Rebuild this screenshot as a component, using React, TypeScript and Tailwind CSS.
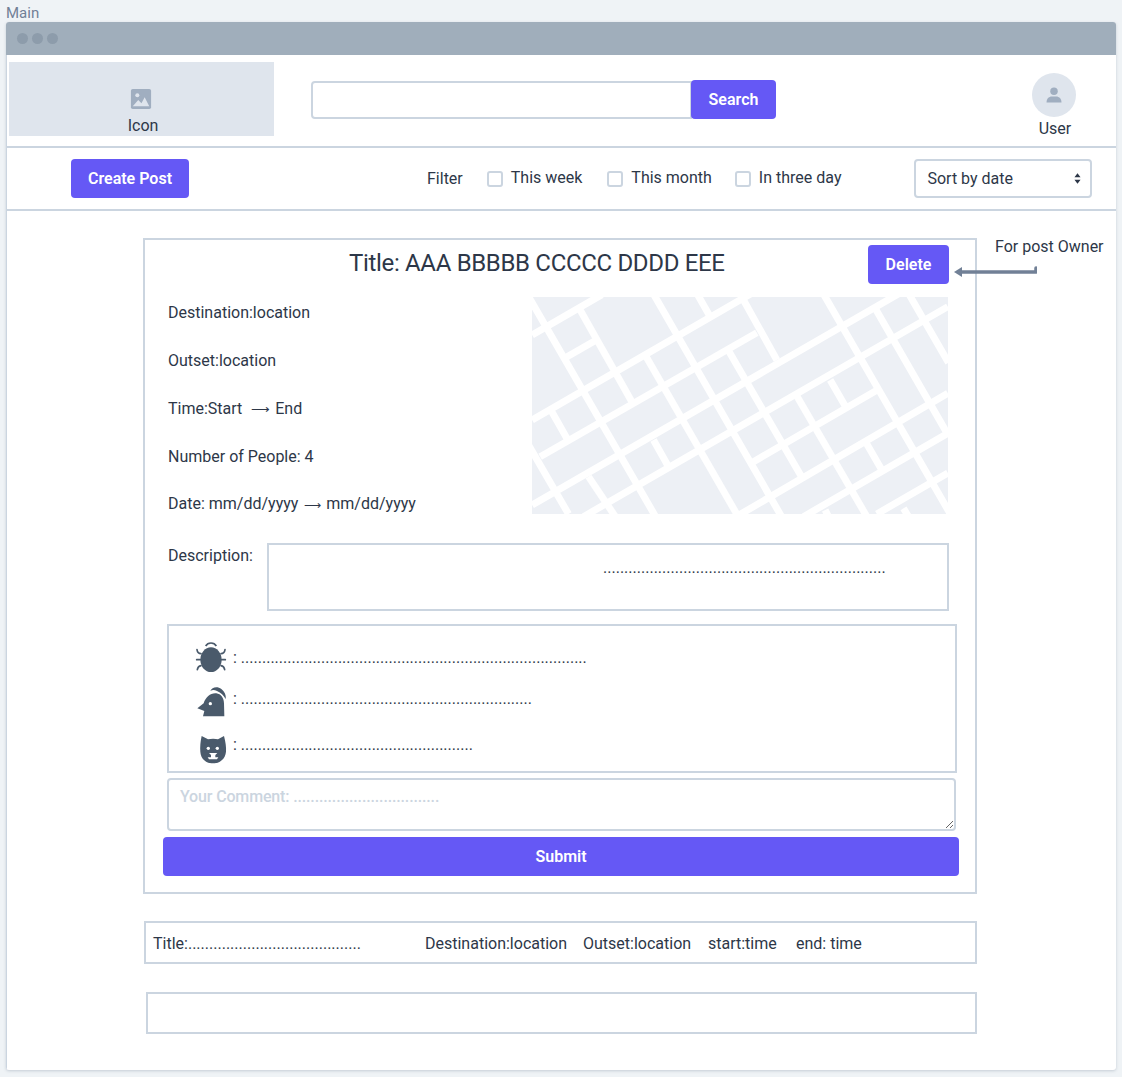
import React from "react";

const F = { fontFamily: '"Roboto", "Liberation Sans", sans-serif' };

const roads: [number, number, number, number][] = [
  [21, 135, 230, 14], [21, 390, 700, -2], [45, 500, 695, 128], [21, 645, 1140, 0],
  [175, 680, 1268, 50], [685, 515, 1060, 298], [640, 676, 1268, 310], [835, 680, 1268, 430],
  [1055, 672, 1268, 549], [118, 205, 212, 151],
  [0, 2, 400, 695], [165, 60, 320, 335], [385, 12, 775, 690], [518, 15, 552, 75],
  [655, 30, 755, 210], [895, 12, 1280, 680], [1050, 55, 1270, 437], [1150, 10, 1270, 218],
  [10, 465, 130, 672], [360, 195, 645, 690], [612, 185, 830, 562], [815, 318, 1035, 697],
  [915, 270, 960, 348], [1025, 462, 1070, 540], [385, 450, 427, 525], [80, 365, 125, 445],
  [190, 560, 272, 682], [1135, 655, 1150, 680], [900, 660, 910, 680],
];

function MapArt() {
  return (
    <svg viewBox="21 21 1247 651" className="block w-[416px] h-[217px] bg-[#edf0f5]">
      {roads.map((r, i) => (
        <line key={i} x1={r[0]} y1={r[1]} x2={r[2]} y2={r[3]} stroke="#ffffff" strokeWidth={21} />
      ))}
    </svg>
  );
}

function Bug() {
  return (
    <svg viewBox="107 67 93 96" className="w-[31px] h-[32px] shrink-0 overflow-visible" fill="#4a5a6b">
      <ellipse cx="152" cy="120" rx="32" ry="37" />
      <path d="M136 79C140 72 146 70 152 70s12 2 16 9" fill="none" stroke="#4a5a6b" strokeWidth="5" />
      <path d="M122 102C116 102 111 97 110 90M120 120H109M122 138C116 139 112 143 111 150M182 102C188 102 193 97 194 90M184 120H195M182 138C188 139 192 143 193 150" fill="none" stroke="#4a5a6b" strokeWidth="5" strokeLinecap="round" />
    </svg>
  );
}

function Chicken() {
  return (
    <svg viewBox="107 201 93 96" className="w-[31px] h-[32px] shrink-0 overflow-visible" fill="#4a5a6b">
      <path d="M111 265 L130 250 C136 230 152 218 168 220 C182 222 191 234 191 250 L192 289 L128 289 L132 273 Z" />
      <circle cx="150" cy="251" r="5" fill="#ffffff" />
      <path d="M150 213 C154 201 172 198 183 207 C192 214 198 225 196 237 C190 226 182 218 170 213 C162 209 156 209 150 213Z" />
    </svg>
  );
}

function Cat() {
  return (
    <svg viewBox="107 339 93 96" className="w-[31px] h-[32px] shrink-0 overflow-visible" fill="#4a5a6b">
      <path d="M124 351 L143 361 C152 359 165 359 173 361 L191 351 C196 370 198 385 197 398 C195 420 178 433 158 433 C138 433 121 420 120 398 C119 385 120 368 124 351Z" />
      <circle cx="144" cy="388" r="5" fill="#ffffff" />
      <circle cx="171" cy="388" r="5" fill="#ffffff" />
      <path d="M146 402 H171 L165 408 V415 H174 L170 421 H146 L142 415 H152 V408Z" fill="#ffffff" />
    </svg>
  );
}

function Check({ label, className }: { label: string; className: string }) {
  return (
    <label className={`flex items-center gap-[8px] text-[16px] text-[#2d3748] ${className}`}>
      <input type="checkbox" className="appearance-none w-[16px] h-[16px] rounded-[3px] border-2 border-[#cbd5e0] bg-white" />
      <span className="-mt-[2px]">{label}</span>
    </label>
  );
}

const dots = (n: number) => ".".repeat(n);

export default function App() {
  return (
    <div style={F} className="w-[1122px] h-[1077px] bg-[#eff3f6] overflow-hidden pt-[5px] pl-[6px]">
      <div className="text-[15px] leading-[17px] text-[#718096]">Main</div>
      <div className="w-[1110px] h-[1048px] bg-white rounded-[3px] shadow-[0_1px_3px_rgba(100,116,139,0.3)] overflow-hidden">
        <div className="h-[33px] bg-[#a0aebb] flex items-center gap-[4px] pl-[11px]">
          <span className="w-[11px] h-[11px] rounded-full bg-[#8d9cab]" />
          <span className="w-[11px] h-[11px] rounded-full bg-[#8d9cab]" />
          <span className="w-[11px] h-[11px] rounded-full bg-[#8d9cab]" />
        </div>
        <div className="h-[1015px] border-l border-[#cbd5e0]">
          <header className="h-[93px] border-b-2 border-[#cbd5e0] flex items-start">
            <div className="ml-[2px] mt-[7px] w-[265px] h-[74px] bg-[#dfe5ed] flex flex-col items-center pt-[26px]">
              <svg viewBox="0 0 24 24" className="w-[22px] h-[22px] -ml-[2px]" fill="#a0aec0">
                <rect x="1" y="1" width="22" height="22" rx="2" />
                <circle cx="8" cy="8" r="2.200" fill="#dfe5ed" />
                <path d="M3 20l6-7 3.500 3.500L16 10l5 10Z" fill="#dfe5ed" />
              </svg>
              <span className="text-[16px] leading-[20px] text-[#2d3748] mt-[6px] ml-[3px]">Icon</span>
            </div>
            <div className="ml-[37px] mt-[25px] flex items-center">
              <input className="w-[381px] h-[38px] rounded-l-[4px] border-2 border-[#cbd5e0] bg-white" />
              <button className="-ml-[1px] w-[85px] h-[39px] rounded-[4px] bg-[#6558f5] text-white font-semibold text-[16px]">Search</button>
            </div>
            <div className="ml-[255px] mt-[18px] w-[46px] flex flex-col items-center">
              <div className="w-[44px] h-[44px] rounded-full bg-[#dfe5ed] flex items-center justify-center">
                <svg viewBox="0 0 24 24" className="w-[18px] h-[18px]" fill="#a0aec0">
                  <circle cx="12" cy="7" r="5" />
                  <path d="M2 22c0-5 3-8 7-8h6c4 0 7 3 7 8Z" />
                </svg>
              </div>
              <span className="text-[16px] leading-[20px] text-[#2d3748] mt-[2px] ml-[2px]">User</span>
            </div>
          </header>
          <div className="h-[63px] border-b-2 border-[#cbd5e0] flex items-center relative">
            <button className="ml-[64px] w-[118px] h-[39px] rounded-[4px] bg-[#6558f5] text-white font-semibold text-[16px]">Create Post</button>
            <span className="ml-[238px] text-[16px] text-[#2d3748]">Filter</span>
            <Check label="This week" className="ml-[24px]" />
            <Check label="This month" className="ml-[25px]" />
            <Check label="In three day" className="ml-[23px]" />
            <div className="relative ml-[73px]">
              <select className="appearance-none w-[178px] h-[39px] rounded-[4px] border-2 border-[#cbd5e0] bg-white pl-[11px] text-[16px] text-[#2d3748]">
                <option>Sort by date</option>
              </select>
              <svg viewBox="0 0 8 12" className="absolute right-[11px] top-[14px] w-[7px] h-[11px]" fill="#2d3748">
                <path d="M4 0l3.500 4.500h-7ZM4 12 .5 7.500h7Z" />
              </svg>
            </div>
          </div>
          <main className="pl-[136px] pt-[27px] relative">
            <section className="w-[834px] h-[656px] border-2 border-[#cbd5e0] relative">
              <div className="flex items-start h-[57px]">
                <h1 className="ml-[204px] mt-[7px] text-[24px] leading-[32px] tracking-[-0.33px] text-[#2d3748] whitespace-nowrap">Title: AAA BBBBB CCCCC DDDD EEE</h1>
                <button className="absolute left-[723px] top-[5px] w-[81px] h-[39px] rounded-[4px] bg-[#6558f5] text-white font-semibold text-[16px]">Delete</button>
              </div>
              <div className="flex">
                <div className="ml-[23px] w-[364px] h-[217px] pt-[4px] text-[16px] leading-[24px] text-[#2d3748] flex flex-col gap-[24px]">
                  <div>Destination:location</div>
                  <div>Outset:location</div>
                  <div>Time:Start&nbsp; <span className="text-[13px] mx-[1px]">⟶</span> End</div>
                  <div className="-mt-[1px]">Number of People: 4</div>
                  <div className="-mt-[1px]">Date: mm/dd/yyyy <span className="text-[12px] mx-[1.5px]">⟶</span> mm/dd/yyyy</div>
                </div>
                <MapArt />
              </div>
              <div className="flex items-start mt-[29px] ml-[23px]">
                <span className="text-[16px] leading-[24px] mt-[1px] text-[#2d3748] w-[99px]">Description:</span>
                <div className="w-[682px] h-[68px] border-2 border-[#cbd5e0] pl-[334px] pt-[11px] text-[16px] leading-[24px] text-[#2d3748] whitespace-nowrap">{dots(67)}</div>
              </div>
              <div className="ml-[22px] mt-[13px] w-[790px] h-[149px] border-2 border-[#cbd5e0] pt-[11px] pl-[27px] flex flex-col text-[16px] text-[#2d3748]">
                <div className="h-[43px] flex items-center gap-[6px]"><Bug /><span className="whitespace-nowrap">: {dots(82)}</span></div>
                <div className="h-[46px] flex items-center gap-[6px]"><Chicken /><span className="whitespace-nowrap -mt-[8px]">: {dots(69)}</span></div>
                <div className="h-[46px] flex items-center gap-[6px]"><Cat /><span className="whitespace-nowrap -mt-[6px]">: {dots(55)}</span></div>
              </div>
              <textarea
                placeholder={"Your Comment: " + dots(34)}
                className="block ml-[22px] mt-[5px] w-[789px] h-[53px] rounded-[4px] border-2 border-[#cbd5e0] bg-white px-[11px] py-[5px] text-[16px] leading-[24px] tracking-[-0.15px] font-medium placeholder:text-[#cbd5e0]"
              />
              <button className="block ml-[18px] mt-[6px] w-[796px] h-[39px] rounded-[4px] bg-[#6558f5] text-white font-semibold text-[16px]">Submit</button>
            </section>
            <div className="mt-[27px] ml-[1px] w-[833px] h-[43px] border-2 border-[#cbd5e0] flex items-center text-[16px] text-[#2d3748] whitespace-nowrap pl-[7px] pt-[2px]">
              <span className="w-[272px]">Title:{dots(41)}</span>
              <span className="w-[158px]">Destination:location</span>
              <span className="w-[125px]">Outset:location</span>
              <span className="w-[88px]">start:time</span>
              <span>end: time</span>
            </div>
            <div className="mt-[28px] ml-[3px] w-[831px] h-[42px] border-2 border-[#cbd5e0]" />
            <div className="absolute left-[988px] top-[26px] text-[16px] leading-[20px] text-[#2d3748] whitespace-nowrap">For post Owner</div>
            <svg viewBox="0 0 84 16" className="absolute left-[946px] top-[52px] w-[84px] h-[16px]" fill="none">
              <path d="M8 9H83V5" stroke="#718096" strokeWidth="3.500" strokeLinecap="round" strokeLinejoin="round" />
              <path d="M1 9 9 4V14Z" fill="#718096" />
            </svg>
          </main>
        </div>
      </div>
    </div>
  );
}
